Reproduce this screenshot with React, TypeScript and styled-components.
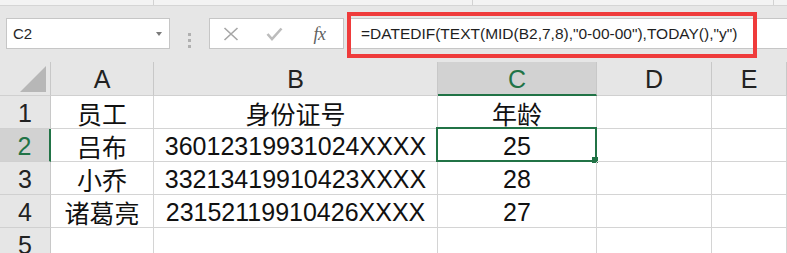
import React from 'react';
import styled, { createGlobalStyle } from 'styled-components';

const GlobalStyle = createGlobalStyle`
  html, body {
    margin: 0;
    padding: 0;
    background: #fff;
    overflow: hidden;
  }
  body {
    font-family: 'Liberation Sans', 'Noto Sans CJK SC', sans-serif;
  }
  * {
    box-sizing: border-box;
  }
`;

const Ribbon = styled.div`
  display: grid;
  grid-template-columns: 154px 319px 301px 1fr;
  height: 6px;
  background: #f3f3f3;
  border-bottom: 1px solid #d5d5d5;
`;

const RibbonGroup = styled.div`
  border-right: 1px solid #d2d2d2;
`;

const FormulaBar = styled.div`
  display: flex;
  align-items: flex-start;
  height: 56px;
  background: #e6e6e6;
`;

const NameBox = styled.div`
  margin: 12px 0 0 6px;
  width: 164px;
  height: 31px;
  background: #fff;
  border: 1px solid #c6c6c6;
  display: flex;
  align-items: center;
  justify-content: space-between;
  padding: 0 7px 0 6px;
  font-size: 15px;
  color: #262626;
`;

const DropArrow = styled.span`
  width: 0;
  height: 0;
  border-left: 3.5px solid transparent;
  border-right: 3.5px solid transparent;
  border-top: 4px solid #7a7a7a;
`;

const Grip = styled.div`
  width: 39px;
  margin-top: 27px;
  display: flex;
  flex-direction: column;
  align-items: center;
  gap: 3px;
`;

const GripDot = styled.span`
  width: 3px;
  height: 3px;
  background: #b0b0b0;
`;

const ButtonsBox = styled.div`
  margin-top: 12px;
  width: 135px;
  height: 31px;
  background: #fff;
  border: 1px solid #c6c6c6;
  display: grid;
  grid-template-columns: 41px 46px 45px;
  align-items: center;
  justify-items: center;
`;

const FxLabel = styled.span`
  font-family: 'Liberation Serif', 'DejaVu Serif', serif;
  font-style: italic;
  font-size: 18px;
  color: #5f5f5f;
  letter-spacing: -0.5px;
  line-height: 1;
`;

const FormulaInput = styled.div`
  position: relative;
  flex: 1;
  margin: 12px 0 0 3px;
  height: 31px;
  background: #fff;
  border-top: 1px solid #c6c6c6;
  border-bottom: 1px solid #c6c6c6;
  padding-left: 14px;
  display: flex;
  align-items: center;
  font-size: 15.5px;
  color: #1f1f1f;
  white-space: nowrap;
`;

const Highlight = styled.div`
  position: absolute;
  left: 0;
  top: -7px;
  width: 410px;
  height: 46px;
  border: 4px solid #ef3b3b;
  pointer-events: none;
`;

const Sheet = styled.div`
  display: grid;
  grid-template-columns: 51px 103px 284px 159px 115px 1fr;
  grid-template-rows: 34px repeat(5, 33px);
`;

const ColHeader = styled.div<{ $active?: boolean }>`
  display: flex;
  align-items: center;
  justify-content: center;
  padding-top: 2px;
  font-size: 25px;
  background: ${p => (p.$active ? '#d2d2d2' : '#e6e6e6')};
  color: ${p => (p.$active ? '#217346' : '#222')};
  border-right: 1px solid #c8c8c8;
  border-bottom: ${p => (p.$active ? '2px solid #217346' : '1px solid #d0d0d0')};
`;

const Corner = styled.div`
  background: #e6e6e6;
  border-right: 1px solid #c8c8c8;
  border-bottom: 1px solid #d0d0d0;
  display: flex;
  align-items: flex-end;
  justify-content: flex-end;
  padding: 0 4px 3px 0;
`;

const RowHeader = styled.div<{ $active?: boolean }>`
  display: flex;
  align-items: center;
  justify-content: center;
  padding-top: 2px;
  font-size: 25px;
  background: ${p => (p.$active ? '#d2d2d2' : '#e6e6e6')};
  color: ${p => (p.$active ? '#217346' : '#222')};
  border-right: ${p => (p.$active ? '2px solid #217346' : '1px solid #c8c8c8')};
  border-bottom: 1px solid #d0d0d0;
`;

const Cell = styled.div`
  position: relative;
  display: flex;
  align-items: center;
  justify-content: center;
  padding-top: 2px;
  font-size: 25px;
  color: #111;
  white-space: nowrap;
  border-right: 1px solid #d4d4d4;
  border-bottom: 1px solid #d4d4d4;
`;

const Selection = styled.div`
  position: absolute;
  left: -2px;
  top: -2px;
  width: 161px;
  height: 35px;
  border: 2px solid #217346;
  pointer-events: none;
`;

const FillHandle = styled.span`
  position: absolute;
  right: -3px;
  bottom: -3px;
  width: 6px;
  height: 6px;
  background: #217346;
`;

const cols = ['A', 'B', 'C', 'D', 'E'];

const rows = [
  ['员工', '身份证号', '年龄'],
  ['吕布', '36012319931024XXXX', '25'],
  ['小乔', '33213419910423XXXX', '28'],
  ['诸葛亮', '23152119910426XXXX', '27'],
  ['', '', ''],
];

const CancelIcon = () => (
  <svg width="16" height="14" viewBox="0 0 16 14">
    <path d="M1.5 1 L14.5 13 M14.5 1 L1.5 13" stroke="#a6a6a6" strokeWidth="1.6" fill="none" />
  </svg>
);

const EnterIcon = () => (
  <svg width="17" height="14" viewBox="0 0 17 14">
    <path d="M1.5 7 L6 12 L15.5 1.5" stroke="#bcbcbc" strokeWidth="2.6" fill="none" />
  </svg>
);

const CornerTriangle = () => (
  <svg width="26" height="26" viewBox="0 0 26 26">
    <polygon points="0,26 26,0 26,26" fill="#b7b7b7" />
  </svg>
);

export default function App() {
  return (
    <>
      <GlobalStyle />
      <Ribbon>
        <RibbonGroup />
        <RibbonGroup />
        <RibbonGroup />
        <div />
      </Ribbon>
      <FormulaBar>
        <NameBox>
          <span>C2</span>
          <DropArrow />
        </NameBox>
        <Grip>
          <GripDot />
          <GripDot />
          <GripDot />
        </Grip>
        <ButtonsBox>
          <CancelIcon />
          <EnterIcon />
          <FxLabel>fx</FxLabel>
        </ButtonsBox>
        <FormulaInput>
          =DATEDIF(TEXT(MID(B2,7,8),"0-00-00"),TODAY(),"y")
          <Highlight />
        </FormulaInput>
      </FormulaBar>
      <Sheet>
        <Corner>
          <CornerTriangle />
        </Corner>
        {cols.map(c => (
          <ColHeader key={c} $active={c === 'C'}>
            {c}
          </ColHeader>
        ))}
        {rows.map((r, i) => (
          <React.Fragment key={i}>
            <RowHeader $active={i === 1}>{i + 1}</RowHeader>
            <Cell>{r[0]}</Cell>
            <Cell>{r[1]}</Cell>
            <Cell>
              {r[2]}
              {i === 1 && (
                <Selection>
                  <FillHandle />
                </Selection>
              )}
            </Cell>
            <Cell />
            <Cell />
          </React.Fragment>
        ))}
      </Sheet>
    </>
  );
}
